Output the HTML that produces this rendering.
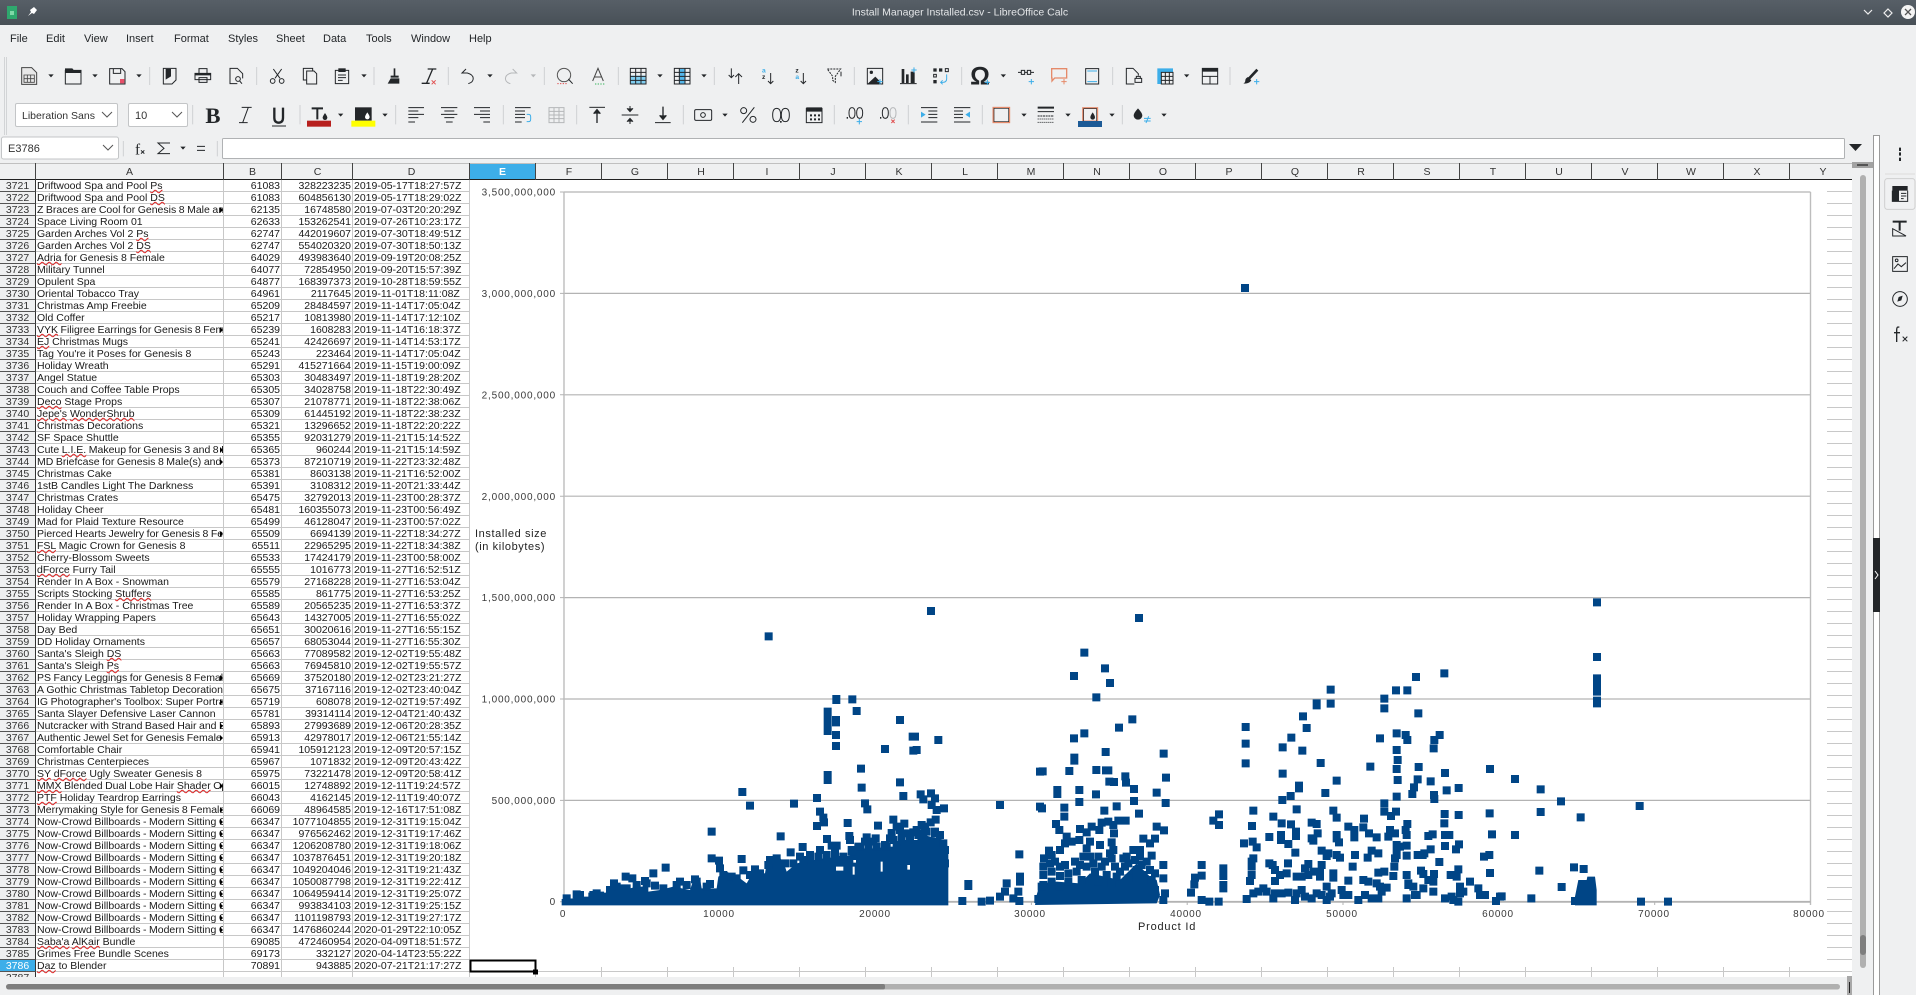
<!DOCTYPE html>
<html><head><meta charset="utf-8"><title>Install Manager Installed.csv - LibreOffice Calc</title>
<style>
html,body{margin:0;padding:0;width:1916px;height:995px;overflow:hidden;background:#eff0f1;font-family:"Liberation Sans",sans-serif}
#tb{position:absolute;left:0;top:0;width:1916px;height:25px;background:linear-gradient(#575f67,#485057)}
#mn{position:absolute;left:0;top:25px;width:1916px;height:30px;font-size:11px;color:#232629}
#mn span{position:absolute;top:8px;line-height:13px}
#gridwrap{position:absolute;left:0;top:180px;width:1852px;height:797px;overflow:hidden;background:#fff;border-bottom:0}
table{border-collapse:separate;border-spacing:0;table-layout:fixed;width:470px;font-size:10.5px;line-height:9px;color:#1a1a1a}
td{height:9px;padding:2px 1px 0;border-bottom:1px solid #c8c8c8;border-right:1px solid #c8c8c8;white-space:nowrap;overflow-x:clip;overflow-y:visible;position:relative;box-sizing:content-box}
td:nth-child(1){background:#eff0f1;text-align:center;border-right:1px solid #333;border-bottom:1px solid #555;color:#333}
td:nth-child(3),td:nth-child(4){text-align:right}
td.h{background:#3daee9;color:#fff}
td.o{padding-right:0;word-spacing:-.4px}
td.o::after{content:"";position:absolute;right:0;top:3px;border-left:3px solid #000;border-top:3px solid transparent;border-bottom:3px solid transparent}
u{text-decoration:underline wavy #e02020 1px;text-underline-offset:0}
svg{position:absolute;left:0;top:0}
.s{fill:none;stroke:#232629;stroke-width:3}
.t{fill:none;stroke:#232629;stroke-width:4}
.f{fill:#232629}
.b{fill:none;stroke:#3daee9;stroke-width:3}
.r{fill:none;stroke:#e05050;stroke-width:3}
.c{fill:none;stroke:#e58a6a;stroke-width:4}
.g{fill:none;stroke:#b5b7b9;stroke-width:3}
.sep{stroke:#cfd1d3;stroke-width:3}
</style></head><body>
<div id="tb"></div>
<div id="mn"><span style="left:10px">File</span><span style="left:46px">Edit</span><span style="left:84px">View</span><span style="left:126px">Insert</span><span style="left:174px">Format</span><span style="left:228px">Styles</span><span style="left:276px">Sheet</span><span style="left:323px">Data</span><span style="left:366px">Tools</span><span style="left:411px">Window</span><span style="left:469px">Help</span></div>
<div id="gridwrap"><table>
<colgroup><col style="width:36px"><col style="width:188px"><col style="width:58px"><col style="width:71px"><col style="width:117px"></colgroup>
<tr><td>3721</td><td>Driftwood Spa and Pool <u>Ps</u></td><td>61083</td><td>328223235</td><td>2019-05-17T18:27:57Z</td></tr>
<tr><td>3722</td><td>Driftwood Spa and Pool <u>DS</u></td><td>61083</td><td>604856130</td><td>2019-05-17T18:29:02Z</td></tr>
<tr><td>3723</td><td class="o">Z Braces are Cool for Genesis 8 Male and</td><td>62135</td><td>16748580</td><td>2019-07-03T20:20:29Z</td></tr>
<tr><td>3724</td><td>Space Living Room 01</td><td>62633</td><td>153262541</td><td>2019-07-26T10:23:17Z</td></tr>
<tr><td>3725</td><td>Garden Arches Vol 2 <u>Ps</u></td><td>62747</td><td>442019607</td><td>2019-07-30T18:49:51Z</td></tr>
<tr><td>3726</td><td>Garden Arches Vol 2 <u>DS</u></td><td>62747</td><td>554020320</td><td>2019-07-30T18:50:13Z</td></tr>
<tr><td>3727</td><td><u>Adria</u> for Genesis 8 Female</td><td>64029</td><td>493983640</td><td>2019-09-19T20:08:25Z</td></tr>
<tr><td>3728</td><td>Military Tunnel</td><td>64077</td><td>72854950</td><td>2019-09-20T15:57:39Z</td></tr>
<tr><td>3729</td><td>Opulent Spa</td><td>64877</td><td>168397373</td><td>2019-10-28T18:59:55Z</td></tr>
<tr><td>3730</td><td>Oriental Tobacco Tray</td><td>64961</td><td>2117645</td><td>2019-11-01T18:11:08Z</td></tr>
<tr><td>3731</td><td>Christmas Amp Freebie</td><td>65209</td><td>28484597</td><td>2019-11-14T17:05:04Z</td></tr>
<tr><td>3732</td><td>Old Coffer</td><td>65217</td><td>10813980</td><td>2019-11-14T17:12:10Z</td></tr>
<tr><td>3733</td><td class="o"><u>VYK</u> Filigree Earrings for Genesis 8 Female</td><td>65239</td><td>1608283</td><td>2019-11-14T16:18:37Z</td></tr>
<tr><td>3734</td><td><u>EJ</u> Christmas Mugs</td><td>65241</td><td>42426697</td><td>2019-11-14T14:53:17Z</td></tr>
<tr><td>3735</td><td>Tag You're it Poses for Genesis 8</td><td>65243</td><td>223464</td><td>2019-11-14T17:05:04Z</td></tr>
<tr><td>3736</td><td>Holiday Wreath</td><td>65291</td><td>415271664</td><td>2019-11-15T19:00:09Z</td></tr>
<tr><td>3737</td><td>Angel Statue</td><td>65303</td><td>30483497</td><td>2019-11-18T19:28:20Z</td></tr>
<tr><td>3738</td><td>Couch and Coffee Table Props</td><td>65305</td><td>34028758</td><td>2019-11-18T22:30:49Z</td></tr>
<tr><td>3739</td><td><u>Deco</u> Stage Props</td><td>65307</td><td>21078771</td><td>2019-11-18T22:38:06Z</td></tr>
<tr><td>3740</td><td><u>Jepe's</u> <u>WonderShrub</u></td><td>65309</td><td>61445192</td><td>2019-11-18T22:38:23Z</td></tr>
<tr><td>3741</td><td>Christmas Decorations</td><td>65321</td><td>13296652</td><td>2019-11-18T22:20:22Z</td></tr>
<tr><td>3742</td><td>SF Space Shuttle</td><td>65355</td><td>92031279</td><td>2019-11-21T15:14:52Z</td></tr>
<tr><td>3743</td><td class="o">Cute <u>L.I.E.</u> Makeup for Genesis 3 and 8 Female</td><td>65365</td><td>960244</td><td>2019-11-21T15:14:59Z</td></tr>
<tr><td>3744</td><td class="o">MD Briefcase for Genesis 8 Male(s) and Female</td><td>65373</td><td>87210719</td><td>2019-11-22T23:32:48Z</td></tr>
<tr><td>3745</td><td>Christmas Cake</td><td>65381</td><td>8603138</td><td>2019-11-21T16:52:00Z</td></tr>
<tr><td>3746</td><td>1stB Candles Light The Darkness</td><td>65391</td><td>3108312</td><td>2019-11-20T21:33:44Z</td></tr>
<tr><td>3747</td><td>Christmas Crates</td><td>65475</td><td>32792013</td><td>2019-11-23T00:28:37Z</td></tr>
<tr><td>3748</td><td>Holiday Cheer</td><td>65481</td><td>160355073</td><td>2019-11-23T00:56:49Z</td></tr>
<tr><td>3749</td><td>Mad for Plaid Texture Resource</td><td>65499</td><td>46128047</td><td>2019-11-23T00:57:02Z</td></tr>
<tr><td>3750</td><td class="o">Pierced Hearts Jewelry for Genesis 8 Female</td><td>65509</td><td>6694139</td><td>2019-11-22T18:34:27Z</td></tr>
<tr><td>3751</td><td><u>FSL</u> Magic Crown for Genesis 8</td><td>65511</td><td>22965295</td><td>2019-11-22T18:34:38Z</td></tr>
<tr><td>3752</td><td>Cherry-Blossom Sweets</td><td>65533</td><td>17424179</td><td>2019-11-23T00:58:00Z</td></tr>
<tr><td>3753</td><td><u>dForce</u> Furry Tail</td><td>65555</td><td>1016773</td><td>2019-11-27T16:52:51Z</td></tr>
<tr><td>3754</td><td>Render In A Box - Snowman</td><td>65579</td><td>27168228</td><td>2019-11-27T16:53:04Z</td></tr>
<tr><td>3755</td><td>Scripts Stocking <u>Stuffers</u></td><td>65585</td><td>861775</td><td>2019-11-27T16:53:25Z</td></tr>
<tr><td>3756</td><td>Render In A Box - Christmas Tree</td><td>65589</td><td>20565235</td><td>2019-11-27T16:53:37Z</td></tr>
<tr><td>3757</td><td>Holiday Wrapping Papers</td><td>65643</td><td>14327005</td><td>2019-11-27T16:55:02Z</td></tr>
<tr><td>3758</td><td>Day Bed</td><td>65651</td><td>30020616</td><td>2019-11-27T16:55:15Z</td></tr>
<tr><td>3759</td><td>DD Holiday Ornaments</td><td>65657</td><td>68053044</td><td>2019-11-27T16:55:30Z</td></tr>
<tr><td>3760</td><td>Santa's Sleigh <u>DS</u></td><td>65663</td><td>77089582</td><td>2019-12-02T19:55:48Z</td></tr>
<tr><td>3761</td><td>Santa's Sleigh <u>Ps</u></td><td>65663</td><td>76945810</td><td>2019-12-02T19:55:57Z</td></tr>
<tr><td>3762</td><td class="o">PS Fancy Leggings for Genesis 8 Female</td><td>65669</td><td>37520180</td><td>2019-12-02T23:21:27Z</td></tr>
<tr><td>3763</td><td>A Gothic Christmas Tabletop Decoration</td><td>65675</td><td>37167116</td><td>2019-12-02T23:40:04Z</td></tr>
<tr><td>3764</td><td class="o">IG Photographer's Toolbox: Super Portrait</td><td>65719</td><td>608078</td><td>2019-12-02T19:57:49Z</td></tr>
<tr><td>3765</td><td>Santa Slayer Defensive Laser Cannon</td><td>65781</td><td>39314114</td><td>2019-12-04T21:40:43Z</td></tr>
<tr><td>3766</td><td class="o">Nutcracker with Strand Based Hair and Beard</td><td>65893</td><td>27993689</td><td>2019-12-06T20:28:35Z</td></tr>
<tr><td>3767</td><td class="o">Authentic Jewel Set for Genesis Female</td><td>65913</td><td>42978017</td><td>2019-12-06T21:55:14Z</td></tr>
<tr><td>3768</td><td>Comfortable Chair</td><td>65941</td><td>105912123</td><td>2019-12-09T20:57:15Z</td></tr>
<tr><td>3769</td><td>Christmas Centerpieces</td><td>65967</td><td>1071832</td><td>2019-12-09T20:43:42Z</td></tr>
<tr><td>3770</td><td><u>SY</u> <u>dForce</u> Ugly Sweater Genesis 8</td><td>65975</td><td>73221478</td><td>2019-12-09T20:58:41Z</td></tr>
<tr><td>3771</td><td class="o"><u>MMX</u> Blended Dual Lobe Hair <u>Shader</u> Options</td><td>66015</td><td>12748892</td><td>2019-12-11T19:24:57Z</td></tr>
<tr><td>3772</td><td><u>PTF</u> Holiday Teardrop Earrings</td><td>66043</td><td>4162145</td><td>2019-12-11T19:40:07Z</td></tr>
<tr><td>3773</td><td class="o">Merrymaking Style for Genesis 8 Female</td><td>66069</td><td>48964585</td><td>2019-12-16T17:51:08Z</td></tr>
<tr><td>3774</td><td class="o">Now-Crowd Billboards - Modern Sitting Option</td><td>66347</td><td>1077104855</td><td>2019-12-31T19:15:04Z</td></tr>
<tr><td>3775</td><td class="o">Now-Crowd Billboards - Modern Sitting Option</td><td>66347</td><td>976562462</td><td>2019-12-31T19:17:46Z</td></tr>
<tr><td>3776</td><td class="o">Now-Crowd Billboards - Modern Sitting Option</td><td>66347</td><td>1206208780</td><td>2019-12-31T19:18:06Z</td></tr>
<tr><td>3777</td><td class="o">Now-Crowd Billboards - Modern Sitting Option</td><td>66347</td><td>1037876451</td><td>2019-12-31T19:20:18Z</td></tr>
<tr><td>3778</td><td class="o">Now-Crowd Billboards - Modern Sitting Option</td><td>66347</td><td>1049204046</td><td>2019-12-31T19:21:43Z</td></tr>
<tr><td>3779</td><td class="o">Now-Crowd Billboards - Modern Sitting Option</td><td>66347</td><td>1050087798</td><td>2019-12-31T19:22:41Z</td></tr>
<tr><td>3780</td><td class="o">Now-Crowd Billboards - Modern Sitting Option</td><td>66347</td><td>1064959414</td><td>2019-12-31T19:25:07Z</td></tr>
<tr><td>3781</td><td class="o">Now-Crowd Billboards - Modern Sitting Option</td><td>66347</td><td>993834103</td><td>2019-12-31T19:25:15Z</td></tr>
<tr><td>3782</td><td class="o">Now-Crowd Billboards - Modern Sitting Option</td><td>66347</td><td>1101198793</td><td>2019-12-31T19:27:17Z</td></tr>
<tr><td>3783</td><td class="o">Now-Crowd Billboards - Modern Sitting Option</td><td>66347</td><td>1476860244</td><td>2020-01-29T22:10:05Z</td></tr>
<tr><td>3784</td><td><u>Saba'a</u> <u>AlKair</u> Bundle</td><td>69085</td><td>472460954</td><td>2020-04-09T18:51:57Z</td></tr>
<tr><td>3785</td><td>Grimes Free Bundle Scenes</td><td>69173</td><td>332127</td><td>2020-04-14T23:55:22Z</td></tr>
<tr><td class="h">3786</td><td><u>Daz</u> to Blender</td><td>70891</td><td>943885</td><td>2020-07-21T21:17:27Z</td></tr>
<tr><td>3787</td><td></td><td></td><td></td><td></td></tr>
</table></div>

<svg width="1916" height="995" viewBox="0 0 1916 995" font-family="'Liberation Sans',sans-serif">
<path d="M1827 191.5H1852M1827 203.5H1852M1827 215.5H1852M1827 227.5H1852M1827 239.5H1852M1827 251.5H1852M1827 263.5H1852M1827 275.5H1852M1827 287.5H1852M1827 299.5H1852M1827 311.5H1852M1827 323.5H1852M1827 335.5H1852M1827 347.5H1852M1827 359.5H1852M1827 371.5H1852M1827 383.5H1852M1827 395.5H1852M1827 407.5H1852M1827 419.5H1852M1827 431.5H1852M1827 443.5H1852M1827 455.5H1852M1827 467.5H1852M1827 479.5H1852M1827 491.5H1852M1827 503.5H1852M1827 515.5H1852M1827 527.5H1852M1827 539.5H1852M1827 551.5H1852M1827 563.5H1852M1827 575.5H1852M1827 587.5H1852M1827 599.5H1852M1827 611.5H1852M1827 623.5H1852M1827 635.5H1852M1827 647.5H1852M1827 659.5H1852M1827 671.5H1852M1827 683.5H1852M1827 695.5H1852M1827 707.5H1852M1827 719.5H1852M1827 731.5H1852M1827 743.5H1852M1827 755.5H1852M1827 767.5H1852M1827 779.5H1852M1827 791.5H1852M1827 803.5H1852M1827 815.5H1852M1827 827.5H1852M1827 839.5H1852M1827 851.5H1852M1827 863.5H1852M1827 875.5H1852M1827 887.5H1852M1827 899.5H1852M1827 911.5H1852M1827 923.5H1852M1827 935.5H1852M1827 947.5H1852M1827 959.5H1852M470 971.5H1852" stroke="#c8c8c8" fill="none"/>
<path d="M535.5 967V977M601.5 967V977M667.5 967V977M733.5 967V977M799.5 967V977M865.5 967V977M931.5 967V977M997.5 967V977M1063.5 967V977M1129.5 967V977M1195.5 967V977M1261.5 967V977M1327.5 967V977M1393.5 967V977M1459.5 967V977M1525.5 967V977M1591.5 967V977M1657.5 967V977M1723.5 967V977M1789.5 967V977" stroke="#c8c8c8" fill="none"/>
<rect x="470" y="180" width="1357" height="787" fill="#fff"/>
<path d="M564 192H1810.500M564 293.400H1810.500M564 394.800H1810.500M564 496.200H1810.500M564 597.600H1810.500M564 699H1810.500M564 800.400H1810.500" stroke="#b3b3b3" stroke-width="1.2" fill="none"/>
<path d="M564 192V902M1810.500 192V905" stroke="#bdbdbd" stroke-width="1.4" fill="none"/>
<path d="M560 192H564M560 293.400H564M560 394.800H564M560 496.200H564M560 597.600H564M560 699H564M560 800.400H564M560 901.700H564" stroke="#b3b3b3" fill="none"/>
<path d="M564 901.800H1810.500" stroke="#b3b3b3" stroke-width="1.8" fill="none"/>
<path d="M564 902V905M719.800 902V905M875.600 902V905M1031.400 902V905M1187.200 902V905M1343 902V905M1498.900 902V905M1654.700 902V905" stroke="#b3b3b3" fill="none"/>
<g fill="#3a3a3a" font-size="10" letter-spacing=".8" text-anchor="end">
<text x="556" y="195.500">3,500,000,000</text><text x="556" y="297">3,000,000,000</text><text x="556" y="398.500">2,500,000,000</text><text x="556" y="500">2,000,000,000</text><text x="556" y="601">1,500,000,000</text><text x="556" y="702.500">1,000,000,000</text><text x="556" y="804">500,000,000</text><text x="556" y="905">0</text>
</g>
<g fill="#3a3a3a" font-size="10" letter-spacing=".8" text-anchor="middle">
<text x="563" y="917">0</text><text x="719" y="917">10000</text><text x="875" y="917">20000</text><text x="1030" y="917">30000</text><text x="1186" y="917">40000</text><text x="1342" y="917">50000</text><text x="1498" y="917">60000</text><text x="1654" y="917">70000</text><text x="1809" y="917">80000</text>
</g>
<text x="1138" y="930" font-size="11" letter-spacing=".8" fill="#222">Product Id</text>
<text x="475" y="537" font-size="11" letter-spacing=".6" fill="#222">Installed size</text>
<text x="475" y="550" font-size="11" letter-spacing=".6" fill="#222">(in kilobytes)</text>
<g transform="translate(460 600) scale(.33333)">
<path fill="#004586" d="M305 916L305 897 340 895 340 875 360 875 360 890 385 890 385 878 440 878 445 860 480 855 490 870 530 860 565 860 565 875 600 870 640 860 690 870 700 840 720 835 725 865 770 865 775 830 800 815 840 835 860 850 880 815 915 820 920 790 930 772 960 772 975 800 980 815 1010 790 1035 785 1090 775 1110 775 1120 765 1150 770 1180 765 1190 745 1260 745 1265 740 1300 740 1320 720 1370 720 1390 705 1455 720 1465 745 1465 800 1465 900 1465 916Z"/>
<path fill="#fff" d="M1128 800h22v12h-22zM1178 800h6v24h-6zM1262 785h6v30h-6zM1180 780h8v8h-8zM1342 795h8v14h-8z"/>
<path fill="none" stroke="#004586" stroke-width="24" stroke-linecap="square" d="M1413 33h0M926 109h0M1129 297h0M1129 300h0M1177 298h0M1190 333h0M1103 335h0M1103 355h0M1103 370h0M1103 393h0M1128 360h0M1128 367h0M1128 405h0M1128 438h0M1320 360h0M1365 410h0M1358 410h0M1435 420h0M1275 447h0M1360 452h0M1370 450h0M1203 506h0M1103 525h0M1103 540h0M1103 532h0M847 576h0M870 617h0M1002 611h0M1071 594h0M1205 563h0M1320 547h0M1330 588h0M1382 583h0M1413 580h0M1390 598h0M1425 595h0M1215 610h0M1222 628h0M1415 615h0M1430 630h0M1452 625h0M1080 635h0M1090 653h0M1092 667h0M1071 678h0M1163 669h0M1254 677h0M1300 659h0M1310 680h0M1333 671h0M1427 659h0M1412 667h0M1385 675h0M755 695h0M962 709h0M1295 699h0M1325 700h0M1360 697h0M1390 700h0M1425 695h0M1440 705h0M1168 708h0M1170 720h0M1101 717h0M1220 712h0M1247 715h0M1028 741h0M1130 737h0M1115 737h0M1280 740h0M1310 735h0M1175 750h0M1195 740h0M992 757h0M1050 765h0M1020 770h0M1080 750h0M755 775h0M777 782h0M845 777h0M617 803h0M580 820h0M497 830h0M517 835h0M555 843h0M462 850h0M705 838h0M660 845h0M750 852h0M850 811h0M885 808h0M780 805h0M585 857h0M350 883h0M400 885h0M420 887h0M480 865h0M1507 903h0M1525 858h0M1525 852h0M930 780h0M950 775h0M975 790h0M1000 790h0M1030 780h0M1050 775h0M1075 770h0M1100 765h0M1125 760h0M1150 770h0M1175 755h0M1200 740h0M1225 735h0M1250 740h0M1275 735h0M1300 720h0M1325 715h0M1350 715h0M1375 705h0M1400 695h0M1425 700h0M1450 730h0M1455 750h0M1455 790h0M1215 725h0M1240 725h0M1290 715h0M1320 690h0M1345 700h0M1370 690h0M1395 680h0M320 895h0M360 885h0M410 880h0M450 870h0M470 860h0M500 865h0M530 855h0M560 850h0M610 865h0M650 855h0M680 855h0M710 845h0M740 860h0M790 825h0M815 830h0M830 835h0M870 825h0M900 820h0M925 795h0"/>
</g>
<g transform="translate(980 600) scale(.33333)">
<path fill="#004586" d="M165 915L170 885 180 850 230 845 300 850 330 820 420 840 470 790 510 830 530 840 540 885 530 910Z"/>
<path fill="none" stroke="#004586" stroke-width="24" stroke-linecap="square" d="M5 905h0M30 902h0M60 890h0M80 850h0M75 875h0M100 895h0M118 903h0M115 875h0M120 830h0M120 845h0M118 763h0M60 615h0M477 54h0M313 158h0M375 205h0M282 228h0M390 249h0M349 292h0M457 358h0M417 383h0M313 400h0M282 415h0M377 456h0M283 473h0M283 482h0M551 461h0M180 515h0M188 514h0M268 513h0M349 510h0M378 511h0M385 511h0M436 529h0M438 548h0M388 545h0M402 546h0M558 533h0M232 570h0M232 582h0M298 570h0M462 567h0M530 578h0M348 583h0M298 606h0M462 603h0M557 609h0M180 620h0M186 625h0M253 623h0M373 632h0M410 619h0M477 641h0M253 650h0M228 672h0M238 690h0M300 687h0M320 697h0M335 680h0M358 690h0M365 668h0M385 665h0M400 675h0M415 662h0M437 662h0M402 700h0M530 680h0M552 691h0M490 716h0M525 716h0M510 730h0M260 710h0M255 730h0M275 725h0M298 720h0M330 725h0M360 735h0M395 727h0M240 750h0M207 752h0M192 775h0M215 765h0M320 745h0M400 750h0M390 760h0M440 770h0M460 750h0M480 750h0M515 767h0M550 795h0M190 800h0M190 825h0M190 855h0M210 790h0M215 815h0M240 800h0M255 795h0M265 820h0M265 845h0M285 785h0M290 815h0M310 770h0M320 800h0M340 790h0M345 815h0M365 800h0M375 785h0M380 825h0M405 800h0M410 830h0M430 775h0M435 800h0M445 790h0M465 780h0M470 810h0M480 770h0M485 795h0M490 825h0M510 810h0M525 820h0M550 835h0M555 880h0M550 900h0M185 860h0M240 860h0M175 897h0M225 785h0M240 828h0M215 845h0M300 795h0M305 840h0M330 770h0M355 770h0M355 845h0M395 775h0M395 850h0M420 815h0M445 835h0M500 785h0M515 840h0M525 870h0M665 795h0M645 833h0M665 827h0M643 853h0M633 878h0M665 900h0M688 905h0M716 905h0M730 805h0M730 828h0M730 855h0M730 865h0M717 643h0M700 662h0M717 675h0M797 381h0M797 431h0M797 490h0M908 442h0M934 413h0M967 452h0M969 349h0M980 384h0M1010 310h0M1010 316h0M1052 269h0M1052 311h0M1022 489h0M908 521h0M957 557h0M957 565h0M932 588h0M907 600h0M1070 542h0M1036 579h0M950 628h0M820 632h0M880 650h0M1060 632h0M1070 653h0M905 670h0M933 673h0M995 668h0M1010 672h0M816 678h0M948 695h0M948 708h0M903 705h0M903 720h0M868 711h0M1013 700h0M995 715h0M1000 722h0M1070 705h0M1070 715h0M1077 727h0M925 732h0M792 730h0M818 725h0M830 742h0M1105 680h0M1123 690h0M1123 712h0M1152 656h0M1150 682h0M1167 700h0M1190 712h0M1125 765h0M1118 800h0M946 758h0M1025 752h0M1045 760h0M1040 768h0M1070 765h0M1080 773h0M820 775h0M815 785h0M815 800h0M868 790h0M878 795h0M924 790h0M985 792h0M885 810h0M900 825h0M920 820h0M975 805h0M1000 815h0M1025 795h0M1020 815h0M1020 830h0M1060 820h0M1060 833h0M815 825h0M810 843h0M885 843h0M950 830h0M965 830h0M985 825h0M1105 842h0M1150 840h0M1165 845h0M1190 850h0M1200 860h0M1220 863h0M1195 818h0M1213 815h0M1163 773h0M1175 752h0M1195 760h0M1243 800h0M1240 828h0M1200 415h0M1213 296h0M1213 325h0M1248 271h0M1282 271h0M1308 231h0M1315 340h0M1393 220h0M1250 400h0M1277 405h0M1282 420h0M1250 450h0M1253 480h0M1250 507h0M1253 540h0M1250 590h0M1171 500h0M1316 501h0M1313 538h0M1352 544h0M1302 562h0M1297 582h0M1213 610h0M1213 635h0M1233 648h0M1248 635h0M1379 405h0M1363 420h0M1361 445h0M1395 519h0M1362 585h0M1363 597h0M1400 571h0M1436 564h0M1394 642h0M1393 670h0M1436 645h0M1282 672h0M1277 690h0M1280 705h0M1230 690h0M1245 700h0M1225 710h0M1358 703h0M1345 708h0M1395 705h0M1408 705h0M1395 738h0M1437 733h0M1428 748h0M1530 507h0M1529 640h0M1536 703h0M1512 770h0M1528 765h0M1530 819h0M1250 735h0M1250 750h0M1250 765h0M1260 740h0M1280 737h0M1280 767h0M1245 775h0M1313 765h0M1333 760h0M1352 748h0M1328 765h0M1378 786h0M1323 812h0M1330 822h0M1362 822h0M1345 840h0M1360 845h0M1280 825h0M1285 850h0M1300 860h0M1305 885h0M1330 865h0M1360 875h0M1412 825h0M1430 830h0M1435 808h0M1440 860h0M1450 875h0M1470 845h0M1495 865h0M1500 885h0M1515 885h0M1548 903h0M1560 890h0M800 897h0M820 880h0M835 875h0M850 865h0M860 875h0M880 895h0M885 880h0M905 880h0M925 878h0M945 900h0M950 880h0M965 870h0M975 890h0M995 895h0M1010 880h0M1025 885h0M1040 860h0M1040 900h0M1050 890h0M1055 880h0M1085 870h0M1090 885h0M1105 885h0M1135 900h0M1155 885h0M1175 895h0M1195 895h0M1205 875h0M1280 895h0M1285 855h0M1310 885h0M1395 895h0M1415 890h0M1420 900h0M1435 905h0M1440 880h0"/>
</g>
<g transform="translate(1500 600) scale(.33333)">
<path fill="#004586" d="M225 916L225 890 235 840 260 840 262 830 285 830 290 870 290 916Z"/>
<path fill="none" stroke="#004586" stroke-width="24" stroke-linecap="square" d="M291 7h0M291 171h0M291 235h0M291 250h0M291 262h0M291 275h0M291 302h0M291 310h0M45 537h0M122 568h0M183 604h0M122 636h0M242 652h0M45 705h0M419 618h0M222 802h0M251 807h0M118 812h0M185 861h0M5 889h0M94 895h0M423 905h0M504 905h0M225 903h0"/>
</g>
<rect x="1241" y="284" width="8" height="8" fill="#004586"/>
<rect x="470.500" y="960.500" width="65" height="11" fill="#fff" stroke="#000" stroke-width="2"/>
<rect x="533" y="969.500" width="5" height="5" fill="#000"/>
<rect x="0" y="159" width="1852" height="21" fill="#eff0f1"/>
<rect x="469.500" y="163" width="66" height="16" fill="#3daee9"/>
<path d="M0 163.500H1852" stroke="#c0c0c0" fill="none"/>
<path d="M0 179.500H1852" stroke="#222" fill="none"/>
<path d="M35.500 163V180M223.500 163V180M281.500 163V180M352.500 163V180M469.500 163V180M535.500 163V180M601.500 163V180M667.500 163V180M733.500 163V180M799.500 163V180M865.500 163V180M931.500 163V180M997.500 163V180M1063.500 163V180M1129.500 163V180M1195.500 163V180M1261.500 163V180M1327.500 163V180M1393.500 163V180M1459.500 163V180M1525.500 163V180M1591.500 163V180M1657.500 163V180M1723.500 163V180M1789.500 163V180" stroke="#444" fill="none"/>
<g font-size="10.5" fill="#333" text-anchor="middle">
<text x="129.500" y="175">A</text><text x="252.500" y="175">B</text><text x="317.500" y="175">C</text><text x="411.500" y="175">D</text><text x="502.500" y="175" fill="#fff" font-weight="bold">E</text><text x="569" y="175">F</text><text x="635" y="175">G</text><text x="701" y="175">H</text><text x="767" y="175">I</text><text x="833" y="175">J</text><text x="899" y="175">K</text><text x="965" y="175">L</text><text x="1031" y="175">M</text><text x="1097" y="175">N</text><text x="1163" y="175">O</text><text x="1229" y="175">P</text><text x="1295" y="175">Q</text><text x="1361" y="175">R</text><text x="1427" y="175">S</text><text x="1493" y="175">T</text><text x="1559" y="175">U</text><text x="1625" y="175">V</text><text x="1691" y="175">W</text><text x="1757" y="175">X</text><text x="1823" y="175">Y</text>
</g>
<rect x="0" y="977" width="1852" height="18" fill="#eff0f1"/>
<rect x="6" y="984" width="879" height="5.500" rx="2.700" fill="#7e7e7e"/>
<rect x="880" y="984" width="960" height="5.500" rx="2.700" fill="#b0b0b0"/>
<rect x="880" y="984" width="5" height="5.500" rx="2" fill="#7e7e7e"/>
<rect x="1847" y="976" width="5" height="19" fill="#a8a8a8"/><path d="M1849.500 982V993" stroke="#222" fill="none"/>
<rect x="1852" y="159" width="21" height="836" fill="#eff0f1"/>
<rect x="1852" y="162" width="21" height="6" fill="#a2a2a2"/><path d="M1857 165H1868" stroke="#222" stroke-width="1.200" fill="none"/>
<rect x="1860" y="175" width="6" height="793" rx="3" fill="#b0b0b0"/>
<rect x="1860" y="935" width="6" height="20" rx="3" fill="#7e7e7e"/>
<rect x="1873" y="135" width="6" height="860" fill="#fff"/>
<path d="M1873.500 135V995M1879.500 135V995M1873 135.500H1880" stroke="#9a9a9a" fill="none"/>
<rect x="1873" y="538" width="7" height="74" fill="#232629"/>
<path d="M1875 571l3 4-3 4" stroke="#fff" fill="none"/>
<rect x="1880" y="136" width="36" height="859" fill="#eff0f1"/>
<g transform="translate(1840 130) scale(.33333)">
<path class="f" d="M177 53h6v10h-6zM177 67h6v10h-6zM177 83h6v10h-6z"/>
<path d="M135 132H225" stroke="#dcdcdc" stroke-width="3" fill="none"/>
<rect x="134" y="146" width="91" height="92" rx="8" fill="#f0f1f2" stroke="#cfcfcf" stroke-width="3"/>
<path class="f" d="M157 168h46v14h-46zM157 182h20v32h-20z"/><path class="s" d="M157 182v32h46v-32M183 190h16M183 198h16M183 206h8"/>
<path class="f" d="M158 272h42v6h-42zM176 272h6v30h-6z"/><path class="s" d="M158 318V296L198 318Z"/>
<path class="s" d="M158 380h44v44h-44zM162 416l12-14 10 8 14-12"/><circle class="s" cx="170" cy="391" r="4"/>
<circle class="s" cx="180" cy="507" r="22"/><path class="f" d="M172 515l4-14 12-4-4 14z"/>
<path class="t" d="M178 592q-8-4-8 8v36M162 608h18"/><path class="s" d="M188 620l14 14M202 620l-14 14" stroke-width="4"/>
</g>
<rect x="7" y="6" width="10" height="13" fill="#2fa86e"/><rect x="10" y="11" width="4" height="4" fill="#7fd8a8"/>
<path d="M28 16l3-4-1-2 4-3 3 3-3 4-2-1z" fill="#fff"/>
<text x="960" y="15.500" font-size="10.500" fill="#e4e6e8" text-anchor="middle">Install Manager Installed.csv - LibreOffice Calc</text>
<path d="M1864 10l4 4 4-4M1888 9l4 4-4 4-4-4z" stroke="#eee" stroke-width="1.200" fill="none"/>
<circle cx="1908" cy="12" r="7" fill="#f4f4f4"/><path d="M1905 9l6 6M1911 9l-6 6" stroke="#555" stroke-width="1.300"/>
<path d="M4.500 57V135M6.500 57V135" stroke="#d2d4d6" fill="none"/>
<rect x="15.500" y="103.500" width="102" height="23" rx="1.500" fill="#fff" stroke="#c3c5c7"/>
<text x="22" y="119" font-size="10.500" fill="#333">Liberation Sans</text>
<path d="M102 112l5 5 5-5" stroke="#555" fill="none"/>
<rect x="128.500" y="103.500" width="59" height="23" rx="1.500" fill="#fff" stroke="#c3c5c7"/>
<text x="135" y="119" font-size="11" fill="#333">10</text>
<path d="M172 112l5 5 5-5" stroke="#555" fill="none"/>
<rect x="1.500" y="137" width="117" height="22" rx="2" fill="#fff" stroke="#c3c5c7"/>
<text x="8" y="152" font-size="11" fill="#333">E3786</text>
<path d="M103 145l5 5 5-5" stroke="#555" fill="none"/>
<rect x="222.500" y="138.500" width="1622" height="20" rx="1" fill="#fff" stroke="#b0b2b4"/>
<path d="M1849 144h13l-6.500 7z" fill="#232629"/>
<g transform="translate(0 55) scale(.33333)">
<path class="sep" d="M449 36v54M770 36v54M1122 36v54M1345 36v54M578 150v58M900 150v58M1187 150v58M370 258v46M652 258v46"/>
<path class="f" d="M145 58h16l-8 9zM277 58h16l-8 9zM409 58h16l-8 9zM1084 58h16l-8 9zM1462 58h16l-8 9zM1014 176h16l-8 9zM1147 176h16l-8 9zM541 275h16l-8 9z"/>
<path d="M65 38h30l15 15v35h-45z" fill="#e8e8e8" stroke="#444" stroke-width="3"/><path d="M72 60h31v22h-31zM72 71h31M82 60v22M92 60v22" fill="none" stroke="#444" stroke-width="2.500"/>
<path class="s" d="M196 46h47v41h-47z"/><path class="f" d="M195 40h22l5 6h21v8h-48z"/>
<path class="s" d="M329 41h37l9 9v37h-46zM340 41v14h22v-14"/><rect x="360" y="72" width="13" height="13" fill="#e8506a"/>
<path class="s" d="M490 40h38v35l-12 12h-26z"/><path class="f" d="M497 42h16v22l-16 10z"/>
<path class="s" d="M597 55V41h24v14M585 55h47v19h-47zM597 68h24v14h-24z"/><path class="f" d="M585 55h47v6h-47z"/>
<path class="s" d="M712 86h-22V40h22l16 16v14"/><circle class="s" cx="714" cy="72" r="7"/><path class="s" d="M719 78l7 8"/>
<path class="s" d="M820 42l20 28M845 42l-20 28"/><circle class="s" cx="818" cy="78" r="7"/><circle class="s" cx="845" cy="78" r="7"/>
<path class="s" d="M920 75h-10V40h28v8M920 48h22l8 8v31h-30z"/>
<path class="s" d="M1006 46h40v40h-40zM1014 60h24M1014 68h24M1014 76h14"/><path class="f" d="M1015 40h22v11h-22z"/>
<path class="f" d="M1181 40h5v22h-5zM1172 62h24v6h-24zM1172 70h26v16h-35z"/>
<path class="t" d="M1283 42h26M1298 42L1280 84M1265 85h24"/><path class="r" d="M1295 76l12 12M1307 76l-12 12"/>
<path class="s" d="M1398 42L1386 54L1402 54C1425 60 1425 80 1405 86"/>
<text x="639" y="204" font-family="'Liberation Serif',serif" font-weight="bold" font-size="68" text-anchor="middle" fill="#232629">B</text>
<path class="s" d="M725 157h30M745 157L728 203M717 203h26"/>
<path d="M823 158v30q0 15 13 15t13-15v-30" fill="none" stroke="#232629" stroke-width="7"/><path class="s" d="M816 213h42"/>
<path d="M935 160h34M952 160v33" fill="none" stroke="#232629" stroke-width="6"/><path class="f" d="M975 174q-7 10-7 14a7 7 0 0 0 14 0q0-4-7-14z"/><rect x="921" y="197" width="72" height="18" fill="#b7201e"/>
<rect x="1065" y="157" width="50" height="40" fill="#232629"/><path d="M1102 172q-7 10-7 14a7 7 0 0 0 14 0q0-4-7-14z" fill="#fff"/><rect x="1054" y="197" width="72" height="18" fill="#ffff00"/>
<path class="s" d="M1225 158h47M1225 168h30M1225 178h47M1225 188h30M1225 201h20"/>
<path class="s" d="M1323 158h49M1333 168h30M1323 178h49M1333 188h30M1338 201h20"/>
<path class="s" d="M1422 158h48M1440 168h30M1422 178h48M1440 188h30M1450 201h20"/>
<text x="405" y="298" font-family="'Liberation Serif',serif" font-size="46" fill="#232629">f</text><path class="s" d="M423 286l10 10M433 286l-10 10"/>
<path class="s" d="M510 264h-36l18 16-18 16h36"/>
<path class="s" d="M591 274h24M591 286h24"/>
</g>
<g transform="translate(500 55) scale(.33333)">
<path class="sep" d="M133 36v54M355 36v54M643 36v54M1063 36v54M1385 36v54M10 150v58M230 150v58M550 150v58M1003 150v58M1225 150v58M1447 150v58"/>
<path class="f" d="M472 58h16l-8 9zM604 58h16l-8 9zM667 176h16l-8 9z"/><path d="M92 58h16l-8 9z" fill="#b5b7b9"/>
<path class="g" d="M38 42L50 54L34 54C11 60 11 80 31 86"/>
<circle fill="none" stroke="#555" stroke-width="3" cx="192" cy="60" r="20"/><path class="s" d="M205 72l13 14"/><path d="M172 86h28" stroke="#e05050" stroke-width="3" stroke-dasharray="4 4"/>
<path d="M278 78L294 40L310 78M283 66h22" fill="none" stroke="#444" stroke-width="3"/><path d="M285 87h30" stroke="#35b35a" stroke-width="3" stroke-dasharray="4 4"/>
<path d="M392 62h44v24h-44z" fill="#7fcdf0"/><path class="s" d="M391 40h47v47h-47zM391 52h47M391 64h47M391 76h47M407 40v47M423 40v47"/>
<path d="M538 42h16v44h-16z" fill="#55b7ea"/><path class="s" d="M523 40h47v47h-47zM523 52h47M523 64h47M523 76h47M538 40v47M555 40v47"/>
<path class="s" d="M694 40v28M686 60l8 8 8-8M716 87V58M706 66l10-10 10 10"/>
<text x="786" y="52" font-size="20" font-weight="bold" fill="#3daee9">a</text><text x="786" y="72" font-size="20" font-weight="bold" fill="#232629">z</text><path class="s" d="M812 54v32M804 78l8 8 8-8"/>
<text x="886" y="52" font-size="20" font-weight="bold" fill="#232629">z</text><text x="886" y="72" font-size="20" font-weight="bold" fill="#3daee9">a</text><path class="s" d="M910 54v32M902 78l8 8 8-8"/>
<path class="s" stroke-dasharray="6 3" d="M982 42h40l-16 22v18l-8-6V64z"/><path class="s" d="M1023 50v14"/>
<path class="s" d="M1102 40h46v47h-46z"/><circle class="f" cx="1114" cy="52" r="5"/><path class="f" d="M1102 87l24-22 10 10 8 12z"/><path class="b" d="M1132 80h16M1140 72v16"/>
<path class="f" d="M1205 42h8v42h-8zM1218 58h8v26h-8zM1232 50h12v34h-12z"/><path class="s" d="M1200 86h50"/><path class="b" d="M1234 45h16M1242 37v16"/>
<path class="f" d="M1300 40h10v10h-10zM1317 40h10v10h-10zM1300 75h10v10h-10z"/><path class="s" d="M1336 41h9v9h-9zM1301 58h8v8h-8z"/><path class="b" d="M1340 58v14q0 10-12 10h-6M1328 76l-6 6 6 6"/>
<text x="1440" y="88" font-size="74" text-anchor="middle" font-weight="bold" fill="#232629">Ω</text><path class="b" d="M1454 82h16M1462 74v16"/>
<path class="s" d="M45 158h47M45 168h30M45 178h30M45 188h30M45 201h20"/><path class="b" d="M80 178h6q6 0 6 8v6q0 8-6 8h-6"/>
<path class="g" d="M147 158h45v45h-45zM147 169h45M147 180h45M147 191h45M162 158v45M177 158v45"/>
<path class="s" d="M268 157h47"/><path d="M291 204v-38M281 176l10-12 10 12" fill="#232629" stroke="#232629" stroke-width="4"/>
<path class="s" d="M365 180h50"/><path d="M390 153v14M381 160l9 10 9-10M390 207v-14M381 200l9-10 9 10" fill="#232629" stroke="#232629" stroke-width="3"/>
<path class="s" d="M465 203h47"/><path d="M489 155v36M479 181l10 12 10-12" fill="#232629" stroke="#232629" stroke-width="4"/>
<rect class="s" x="584" y="164" width="51" height="32" rx="4"/><circle class="s" cx="609" cy="180" r="7"/>
<path class="s" d="M763 157L727 203"/><circle class="s" cx="731" cy="167" r="9"/><circle class="s" cx="759" cy="193" r="9"/>
<path class="s" d="M830 160q-12 0-12 20t12 20q12 0 12-20t-12-20zM856 160q-12 0-12 20t12 20q12 0 12-20t-12-20z"/><path class="f" d="M840 198h5v5h-5z"/>
<path class="s" d="M919 160h47v43h-47z"/><path class="f" d="M919 157h47v13h-47zM930 178h6v6h-6zM942 178h6v6h-6zM954 178h6v6h-6zM930 190h6v6h-6zM942 190h6v6h-6zM954 190h6v6h-6z"/>
<path class="f" d="M1040 186h4v5h-4z"/><path class="s" d="M1056 158q-9 0-9 16t9 16q9 0 9-16t-9-16zM1079 158q-9 0-9 16t9 16q9 0 9-16t-9-16z"/><path class="b" d="M1070 200h16M1078 192v16"/>
<path class="f" d="M1140 186h4v5h-4z"/><path class="s" d="M1156 158q-9 0-9 16t9 16q9 0 9-16t-9-16z"/><path class="g" d="M1179 158q-9 0-9 16t9 16q9 0 9-16t-9-16z"/><path class="r" d="M1174 194l10 10M1184 194l-10 10"/>
<path class="s" d="M1263 158h49M1285 168h27M1285 178h27M1285 188h27M1263 201h49"/><path d="M1263 170l14 9-14 9z" fill="#3daee9"/>
<path class="s" d="M1362 158h49M1362 168h27M1362 178h27M1362 188h27M1362 201h49"/><path d="M1410 170l-14 9 14 9z" fill="#3daee9"/>
</g>
<g transform="translate(1000 55) scale(.33333)">
<path class="sep" d="M338 36v54M690 36v54M367 150v58"/>
<path class="f" d="M2 58h16l-8 9zM552 58h16l-8 9zM64 176h16l-8 9zM196 176h16l-8 9zM328 176h16l-8 9zM484 176h16l-8 9z"/>
<path class="s" d="M54 52h10M92 52h10M64 46h10v12h-10zM82 46h10v12h-10zM74 52h8"/><path class="b" d="M86 80h16M94 72v16"/>
<path class="c" d="M155 41h45v28h-36l-8 9v-9h-1z"/><path d="M184 80h16M192 72v16" stroke="#e58a6a" stroke-width="3" fill="none"/>
<path class="s" d="M257 41h39v46h-39z"/><path class="b" d="M262 48h29M262 80h29"/>
<path class="s" d="M415 62V56l-16-16h-20v47h24"/><path class="s" d="M405 70h20v12h-20zM409 70v-6h12v6"/>
<path d="M472 40h47v12h-47zM472 52h12v35h-12z" fill="#3daee9"/><path class="s" d="M484 52h35v35h-35zM484 64h35M484 76h35M496 52v35M508 52v35"/>
<path class="s" d="M607 40h46v47h-46zM607 64h46M630 64v23"/><path class="f" d="M607 40h46v10h-46z"/>
<path d="M772 44L745 73" stroke="#232629" stroke-width="8" fill="none"/><path class="f" d="M744 66l10 10q-6 10-24 10q6-4 6-10t8-10z"/><path class="b" d="M762 80h16M770 72v16"/>
<rect x="-20" y="158" width="48" height="44" fill="none" stroke="#e58a6a" stroke-width="5"/><rect x="-18" y="160" width="44" height="40" fill="none" stroke="#232629" stroke-width="2"/>
<path d="M113 158h49" stroke="#232629" stroke-width="6"/><path class="s" d="M113 170h49"/><path class="s" stroke-dasharray="6 2" d="M113 183h49"/><path class="s" stroke-dasharray="3 3" d="M113 192h49M113 202h49"/>
<rect x="249" y="159" width="43" height="40" fill="none" stroke="#e58a6a" stroke-width="5"/><rect x="251" y="161" width="39" height="38" fill="none" stroke="#232629" stroke-width="2"/><path class="f" d="M278 172q-7 10-7 15a7 7 0 0 0 14 0q0-5-7-15z"/><rect x="234" y="198" width="72" height="18" fill="#1c5a96"/>
<path class="f" d="M414 160q-13 14-13 21a13 13 0 0 0 26 0q0-7-13-21z"/><path class="b" d="M432 190h20M432 198h20M438 204l8-20"/>
</g>
</svg>
</body></html>
